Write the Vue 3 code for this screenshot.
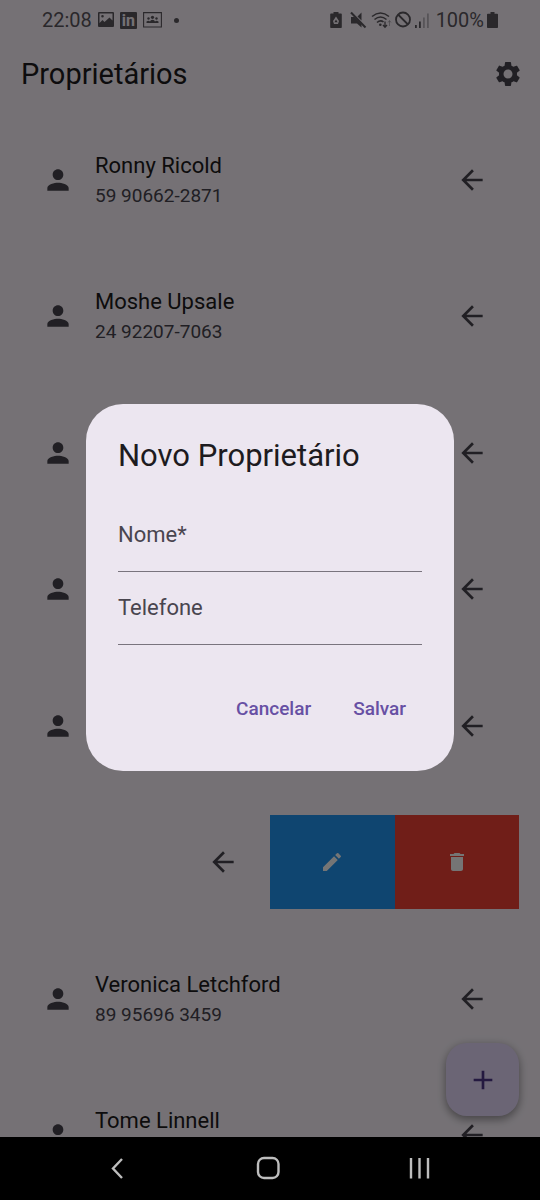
<script setup>
import { ref } from 'vue'

const owners = [
  { name: 'Ronny Ricold', phone: '59 90662-2871' },
  { name: 'Moshe Upsale', phone: '24 92207-7063' },
  {},
  {},
  {},
  { swiped: true },
  { name: 'Veronica Letchford', phone: '89 95696 3459' },
  { name: 'Tome Linnell' },
]

const name = ref('')
const phone = ref('')
</script>

<template>
  <div class="screen">
    <div class="app">
      <div class="status">
        <div class="status-group">
          <span class="clock">22:08</span>
          <svg class="s-image" viewBox="0 0 16 16">
            <path fill-rule="evenodd" d="M1 0h14a1 1 0 0 1 1 1v13a1 1 0 0 1-1 1H1a1 1 0 0 1-1-1V1a1 1 0 0 1 1-1zM1.500 1.500v9.500l3-3 2 2 5-4.500 3 3V1.500zM4.500 3a1.300 1.300 0 1 1 0 2.600 1.300 1.300 0 0 1 0-2.600z" />
          </svg>
          <span class="s-in">in</span>
          <svg class="s-people" viewBox="0 0 19 16">
            <path d="M.6.6h17.800v14.400H.6z" fill="none" stroke="currentColor" stroke-width="1.100" />
            <circle cx="9.500" cy="5.300" r="1.600" /><circle cx="5.500" cy="6.500" r="1.200" /><circle cx="13.500" cy="6.500" r="1.200" />
            <path d="M3.500 11V9.500q2-1.500 3.500 0 .5-1.700 2.500-1.700t2.500 1.700q1.500-1.500 3.500 0V11z" />
          </svg>
          <span class="dot"></span>
        </div>
        <div class="status-group right">
          <svg class="w18" viewBox="0 0 18 18">
            <path fill-rule="evenodd" d="M4.500 1h5v1.500h2.500a.8.8 0 0 1 .8.800v12.900a.8.8 0 0 1-.8.800h-10a.8.8 0 0 1-.8-.8V3.300a.8.8 0 0 1 .8-.8h2.500zM7 5.500 4 10l1 3h4l1-3zM7 8.500l1.600 2.800H5.400z" />
          </svg>
          <svg class="w18" viewBox="0 0 18 18">
            <path d="M1 6h3.500l7 7v3.500L7 12.500H1zM11.500 1.500v8L7.500 5.500z" />
            <path d="m1 1.500 14.500 15" fill="none" stroke="currentColor" stroke-width="2" />
          </svg>
          <svg class="w21" viewBox="0 0 21 18">
            <g fill="none" stroke="currentColor" stroke-width="1.600">
              <path d="M1 5.500q8.500-7 17 0M3.500 8.500q6-5 12 0M6 11.500q3.500-3 6.500-.5" />
            </g>
            <circle cx="9.300" cy="13.700" r="1.300" />
            <path d="M14 10.500v5.500m-2-2 2 2.200 2-2.200" fill="none" stroke="currentColor" stroke-width="1.300" />
            <path d="M18.500 15v-5m-1.500 1.500 1.500-2 1.500 2" fill="none" stroke="currentColor" opacity=".4" />
          </svg>
          <svg class="w16" viewBox="0 0 16 18" fill="none" stroke="currentColor" stroke-width="1.800">
            <circle cx="8" cy="8.500" r="7" /><path d="m3 3.500 10 10" />
          </svg>
          <svg class="w19" viewBox="0 0 19 18">
            <path d="M1 14h1.800v3H1zM5 10.500h1.800V17H5z" />
            <path opacity=".4" d="M9 6.500h1.800V17H9zM13 2.500h1.800V17H13z" />
          </svg>
          <span class="clock">100%</span>
          <svg class="w12" viewBox="0 0 12 18">
            <path d="M3.500 1h4v1.800h2.700a.8.8 0 0 1 .8.800v12.600a.8.8 0 0 1-.8.800H.8a.8.8 0 0 1-.8-.8V3.600a.8.8 0 0 1 .8-.8h2.700z" />
          </svg>
        </div>
      </div>

      <header class="bar">
        <h1>Proprietários</h1>
        <button class="icon-btn" aria-label="Configurações">
          <svg viewBox="0 0 24 24"><path d="M19.140 12.940c.04-.3.060-.61.060-.94 0-.32-.02-.64-.07-.94l2.030-1.580c.18-.14.230-.41.120-.61l-1.920-3.320c-.12-.22-.37-.29-.59-.22l-2.390.960c-.5-.38-1.030-.7-1.620-.94l-.36-2.540c-.04-.24-.24-.41-.48-.41h-3.840c-.24 0-.43.170-.47.410l-.36 2.540c-.59.240-1.130.570-1.620.940l-2.390-.96c-.22-.08-.47 0-.59.220L2.740 8.870c-.12.210-.08.470.120.610l2.030 1.580c-.05.300-.09.630-.09.940s.02.640.070.940l-2.030 1.580c-.18.140-.23.410-.12.610l1.920 3.320c.12.220.370.290.590.220l2.390-.96c.5.380 1.030.700 1.620.940l.36 2.540c.05.240.240.410.480.410h3.840c.24 0 .44-.17.470-.41l.36-2.540c.59-.24 1.130-.56 1.620-.94l2.390.960c.22.080.470 0 .59-.22l1.920-3.320c.12-.22.070-.47-.12-.61zM12 15.600c-1.980 0-3.600-1.620-3.600-3.600s1.620-3.600 3.600-3.600 3.600 1.620 3.600 3.600-1.620 3.600-3.600 3.600z" /></svg>
        </button>
      </header>

      <ul class="list">
        <li v-for="(owner, i) in owners" :key="i" class="row">
          <div class="tile">
            <svg v-if="!owner.swiped" class="person" viewBox="0 0 24 24"><path d="M12 12c2.210 0 4-1.790 4-4s-1.790-4-4-4-4 1.790-4 4 1.790 4 4 4zm0 2c-2.670 0-8 1.340-8 4v2h16v-2c0-2.660-5.330-4-8-4z" /></svg>
            <div class="info">
              <p v-if="owner.name" class="name">{{ owner.name }}</p>
              <p v-if="owner.name" class="phone">{{ owner.phone }}</p>
            </div>
            <svg class="arrow" viewBox="0 0 24 24"><path d="M20 11H7.830l5.590-5.590L12 4l-8 8 8 8 1.410-1.410L7.830 13H20z" /></svg>
          </div>
          <div v-if="owner.swiped" class="actions">
            <button class="edit" aria-label="Editar">
              <svg viewBox="0 0 24 24"><path d="M3 17.250V21h3.750L17.810 9.940l-3.750-3.750zM20.710 7.040a1 1 0 0 0 0-1.410l-2.340-2.340a1 1 0 0 0-1.410 0l-1.830 1.830 3.750 3.750z" /></svg>
            </button>
            <button class="delete" aria-label="Excluir">
              <svg viewBox="0 0 24 24"><path d="M6 19c0 1.100.9 2 2 2h8c1.100 0 2-.9 2-2V7H6zM19 4h-3.500l-1-1h-5l-1 1H5v2h14z" /></svg>
            </button>
          </div>
        </li>
      </ul>

      <button class="fab" aria-label="Adicionar">
        <svg viewBox="0 0 24 24"><path d="M19 13h-6v6h-2v-6H5v-2h6V5h2v6h6z" /></svg>
      </button>

      <div class="scrim">
        <form class="dialog" role="dialog" aria-labelledby="dialog-title" @submit.prevent>
          <h2 id="dialog-title">Novo Proprietário</h2>
          <div class="fields">
            <div class="field">
              <input id="owner-name" v-model="name" type="text" />
              <label v-show="!name" for="owner-name">Nome*</label>
            </div>
            <div class="field">
              <input id="owner-phone" v-model="phone" type="tel" />
              <label v-show="!phone" for="owner-phone">Telefone</label>
            </div>
          </div>
          <div class="buttons">
            <button type="button">Cancelar</button>
            <button type="submit">Salvar</button>
          </div>
        </form>
      </div>
    </div>

    <nav class="nav">
      <button aria-label="Voltar">
        <svg viewBox="0 0 26 26"><path d="M18 4 9 13.500l9 9.500" /></svg>
      </button>
      <button aria-label="Início">
        <svg viewBox="0 0 26 26"><rect x="3" y="3" width="20.500" height="20" rx="6" /></svg>
      </button>
      <button aria-label="Recentes">
        <svg viewBox="0 0 26 26"><path d="M5 3v20.500M13.500 3v20.500M22 3v20.500" /></svg>
      </button>
    </nav>
  </div>
</template>

<style>
body {
  background: #000;
}
</style>

<style scoped>
* {
  box-sizing: border-box;
}
.screen {
  display: flex;
  flex-direction: column;
  height: 100vh;
  font-family: Roboto, 'Liberation Sans', sans-serif;
  color: #1d1b20;
}
.app {
  position: relative;
  flex: 1;
  min-height: 0;
  overflow: hidden;
  background: #fef7ff;
}
svg {
  display: block;
  flex: none;
  fill: currentColor;
}
svg[fill='none'] {
  fill: none;
}
button {
  border: 0;
  padding: 0;
  background: none;
  font: inherit;
  color: inherit;
}
h1,
h2,
p,
ul {
  margin: 0;
  padding: 0;
  font-weight: 400;
}

.status {
  display: flex;
  justify-content: space-between;
  align-items: center;
  height: 38px;
  padding: 2px 41px 0 42px;
  color: #5d585f;
}
.status-group {
  display: flex;
  align-items: center;
  gap: 6px;
}
.status-group.right {
  gap: 3px;
}
.clock {
  font-size: 20px;
  line-height: 24px;
}
.s-image {
  width: 16px;
  height: 16px;
}
.s-in {
  width: 17px;
  height: 17px;
  border-radius: 1px;
  background: #5d585f;
  color: #fef7ff;
  font-size: 16px;
  font-weight: 700;
  line-height: 17px;
  text-align: center;
}
.s-people {
  width: 19px;
  height: 16px;
}
.dot {
  width: 5px;
  height: 5px;
  margin-left: 6px;
  border-radius: 50%;
  background: currentColor;
}
.w12 {
  width: 12px;
  height: 18px;
}
.w16 {
  width: 16px;
  height: 18px;
}
.w18 {
  width: 18px;
  height: 18px;
}
.w19 {
  width: 19px;
  height: 18px;
}
.w21 {
  width: 21px;
  height: 18px;
}

.bar {
  display: flex;
  justify-content: space-between;
  align-items: center;
  height: 73px;
  padding: 0 17px 2px 21px;
}
.bar h1 {
  font-size: 29px;
  line-height: 36px;
}
.icon-btn {
  color: #49454f;
}
.icon-btn svg {
  width: 30px;
  height: 30px;
}
.person,
.arrow,
.fab svg {
  width: 32px;
  height: 32px;
}

.list {
  padding: 22px 21px 0;
  list-style: none;
}
.row {
  display: flex;
  height: 94px;
  margin-bottom: 42px;
}
.row:nth-child(even) {
  margin-bottom: 43px;
}
.tile {
  flex: 1;
  display: flex;
  align-items: center;
  gap: 21px;
  padding: 0 31px 0 21px;
}
.person,
.arrow {
  color: #49454f;
}
.info {
  flex: 1;
}
.name {
  font-size: 22px;
  line-height: 32px;
}
.phone {
  min-height: 28px;
  font-size: 19px;
  line-height: 28px;
  color: #49454f;
}
.actions {
  flex: 0 0 50%;
  display: flex;
}
.actions button {
  flex: 1;
  display: grid;
  place-items: center;
  color: #fff;
}
.actions svg {
  width: 24px;
  height: 24px;
}
.edit {
  background: #2196f3;
}
.delete {
  background: #f44336;
}

.fab {
  position: absolute;
  right: 21px;
  bottom: 21px;
  display: grid;
  place-items: center;
  width: 73px;
  height: 73px;
  border-radius: 21px;
  background: #eaddff;
  color: #4f378b;
  box-shadow: 0 4px 8px rgba(0, 0, 0, 0.3), 0 1px 10px rgba(0, 0, 0, 0.15);
}

.scrim {
  position: absolute;
  inset: 0;
  display: grid;
  place-items: center;
  padding: 38px 40px 0;
  background: rgba(0, 0, 0, 0.54);
}
.dialog {
  width: 100%;
  max-width: 368px;
  padding: 32px 32px 31px;
  border-radius: 37px;
  background: #ece6f0;
}
.dialog h2 {
  font-size: 31px;
  line-height: 40px;
}
.fields {
  margin: 23px 0 32px;
}
.field {
  display: grid;
  height: 73px;
  border-bottom: 1px solid #79747e;
}
.field input,
.field label {
  grid-area: 1 / 1;
  min-width: 0;
  font-size: 22px;
  line-height: 32px;
}
.field input {
  width: 100%;
  border: 0;
  padding: 0;
  outline: 0;
  background: transparent;
  font-family: inherit;
  color: #1d1b20;
}
.field label {
  align-self: center;
  color: #49454f;
  pointer-events: none;
}
.buttons {
  display: flex;
  justify-content: flex-end;
  gap: 10px;
}
.buttons button {
  height: 63px;
  padding: 0 16px;
  font-size: 19px;
  font-weight: 500;
  color: #6750a4;
}

.nav {
  display: flex;
  justify-content: space-around;
  align-items: center;
  height: 63px;
  padding: 0 45px 2px 41px;
  background: #000;
  color: #bdbdbd;
}
.nav svg {
  width: 26px;
  height: 26px;
  fill: none;
  stroke: currentColor;
  stroke-width: 2.4;
}
</style>
